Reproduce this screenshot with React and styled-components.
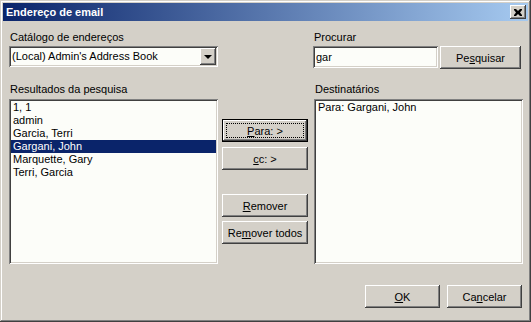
import React, { useState } from 'react';
import styled, { createGlobalStyle, css } from 'styled-components';

const Global = createGlobalStyle`
  html, body { margin: 0; padding: 0; background: #d4d0c8; }
  * { box-sizing: border-box; }
`;

const raised = css`
  box-shadow: inset -1px -1px #404040, inset 1px 1px #fff, inset -2px -2px #808080, inset 2px 2px #d4d0c8;
`;

const sunken = css`
  box-shadow: inset 1px 1px #808080, inset -1px -1px #fff, inset 2px 2px #404040, inset -2px -2px #d4d0c8;
`;

const Window = styled.div`
  width: 531px;
  height: 322px;
  background: #d4d0c8;
  padding: 3px;
  display: flex;
  flex-direction: column;
  font-family: "Liberation Sans", Arial, sans-serif;
  font-size: 11px;
  color: #000;
  box-shadow: inset -1px -1px #404040, inset 1px 1px #d4d0c8, inset -2px -2px #808080, inset 2px 2px #fff;
`;

const TitleBar = styled.div`
  height: 18px;
  flex-shrink: 0;
  background: linear-gradient(to right, #0a246a, #a6caf0);
  display: flex;
  align-items: center;
  justify-content: space-between;
  padding: 0 2px 0 3px;
`;

const Title = styled.span`
  color: #fff;
  font-weight: bold;
  font-size: 11px;
  line-height: 18px;
  font-family: "Liberation Sans", Arial, sans-serif;
`;

const CloseBtn = styled.div`
  width: 16px;
  height: 14px;
  background: #d4d0c8;
  ${raised};
  display: flex;
  align-items: center;
  justify-content: center;
`;

const Body = styled.div`
  flex: 1;
  padding: 10px 5px 0 6px;
  display: flex;
  flex-direction: column;
`;

const TopRow = styled.div`
  display: grid;
  grid-template-columns: 209px 1fr 210px;
  height: 38px;
`;

const Field = styled.div`
  display: flex;
  flex-direction: column;
  grid-column: ${p => p.$col};
`;

const Label = styled.div`
  line-height: 13px;
  height: 13px;
  margin-bottom: ${p => p.$gap || 2}px;
  padding-left: 1px;
  white-space: nowrap;
`;

const Select = styled.div`
  width: 209px;
  height: 21px;
  background: #fcfdf9;
  ${sunken};
  display: flex;
  align-items: center;
  justify-content: space-between;
  padding: 2px;
  padding-left: 3px;
`;

const SelectText = styled.span`
  line-height: 17px;
`;

const DropBtn = styled.div`
  width: 16px;
  height: 17px;
  background: #d4d0c8;
  ${raised};
  display: flex;
  align-items: center;
  justify-content: center;
`;

const Arrow = styled.div`
  width: 0;
  height: 0;
  border-left: 4px solid transparent;
  border-right: 4px solid transparent;
  border-top: 4px solid #000;
  margin-top: 1px;
`;

const SearchLine = styled.div`
  display: flex;
  gap: 2px;
  align-items: flex-start;
`;

const Input = styled.input`
  width: 125px;
  height: 22px;
  border: none;
  outline: none;
  background: #fcfdf9;
  ${sunken};
  padding: 0 3px;
  font-family: "Liberation Sans", Arial, sans-serif;
  font-size: 11px;
  color: #000;
`;

const Button = styled.button`
  width: ${p => p.$w || 86}px;
  height: 23px;
  flex-shrink: 0;
  padding: 0;
  border: none;
  background: #d4d0c8;
  ${raised};
  font-family: "Liberation Sans", Arial, sans-serif;
  font-size: 11px;
  color: #000;
  position: relative;
  ${p => p.$default && css`
    outline: 1px solid #000;
    outline-offset: -1px;
    box-shadow: inset -2px -2px #404040, inset 2px 2px #fff, inset -3px -3px #808080;
    &::after {
      content: "";
      position: absolute;
      inset: 4px;
      border: 1px dotted #000;
    }
  `}
`;

const MidRow = styled.div`
  margin-top: 14px;
  display: grid;
  grid-template-columns: 209px 1fr 209px;
  column-gap: 4px;
`;

const Column = styled.div`
  display: flex;
  flex-direction: column;
`;

const ListBox = styled.div`
  height: 165px;
  background: #fcfdf9;
  ${sunken};
  padding: 2px;
`;

const Item = styled.div`
  height: 13px;
  line-height: 13px;
  padding-left: 2px;
  white-space: nowrap;
  ${p => p.$selected && css`
    background: #0a246a;
    color: #fff;
  `}
`;

const ButtonStack = styled.div`
  padding-top: 36px;
  display: flex;
  flex-direction: column;
`;

const Footer = styled.div`
  margin-top: 21px;
  display: flex;
  justify-content: flex-end;
  gap: 7px;
  padding-right: 1px;
`;

const Key = styled.u`
  text-decoration: underline;
`;

const results = ['1, 1', 'admin', 'Garcia, Terri', 'Gargani, John', 'Marquette, Gary', 'Terri, Garcia'];

export default function App() {
  const [selected, setSelected] = useState('Gargani, John');
  const [query, setQuery] = useState('gar');

  return (
    <>
      <Global />
      <Window>
        <TitleBar>
          <Title>Endereço de email</Title>
          <CloseBtn>
            <svg width="8" height="7" viewBox="0 0 8 7">
              <path d="M0 0h2l2 2 2-2h2v1L6 3.5 8 6v1H6L4 5 2 7H0V6l2-2.5L0 1z" fill="#000" />
            </svg>
          </CloseBtn>
        </TitleBar>
        <Body>
          <TopRow>
            <Field $col="1">
              <Label>Catálogo de endereços</Label>
              <Select>
                <SelectText>(Local) Admin's Address Book</SelectText>
                <DropBtn><Arrow /></DropBtn>
              </Select>
            </Field>
            <Field $col="3">
              <Label>Procurar</Label>
              <SearchLine>
                <Input value={query} onChange={e => setQuery(e.target.value)} />
                <Button $w={81}>Pe<Key>s</Key>quisar</Button>
              </SearchLine>
            </Field>
          </TopRow>
          <MidRow>
            <Column>
              <Label $gap={3}>Resultados da pesquisa</Label>
              <ListBox>
                {results.map(r => (
                  <Item key={r} $selected={r === selected} onClick={() => setSelected(r)}>{r}</Item>
                ))}
              </ListBox>
            </Column>
            <ButtonStack>
              <Button $default><Key>P</Key>ara: &gt;</Button>
              <Button style={{ marginTop: 5 }}><Key>c</Key>c: &gt;</Button>
              <Button style={{ marginTop: 24 }}><Key>R</Key>emover</Button>
              <Button style={{ marginTop: 4 }}>Re<Key>m</Key>over todos</Button>
            </ButtonStack>
            <Column>
              <Label $gap={3}>Destinatários</Label>
              <ListBox>
                <Item>Para: Gargani, John</Item>
              </ListBox>
            </Column>
          </MidRow>
          <Footer>
            <Button $w={75}><Key>O</Key>K</Button>
            <Button $w={75}>Ca<Key>n</Key>celar</Button>
          </Footer>
        </Body>
      </Window>
    </>
  );
}
